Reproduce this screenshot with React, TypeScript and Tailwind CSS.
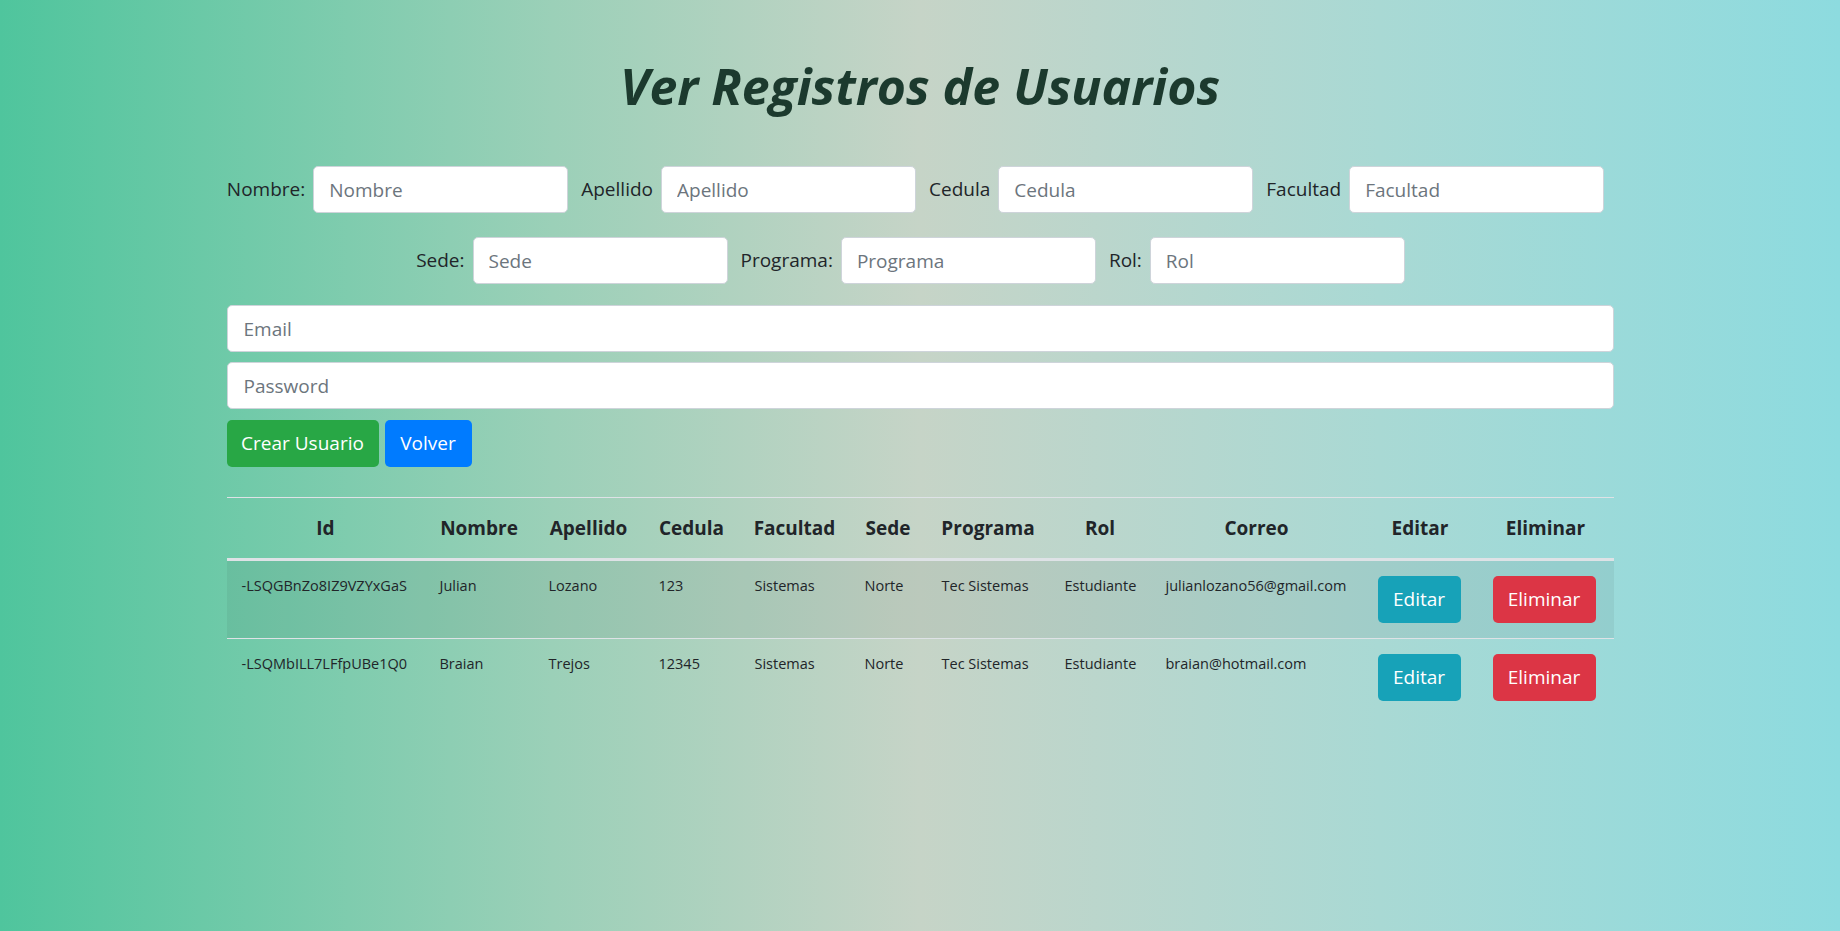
const font = { fontFamily: '"Open Sans", "Noto Sans", sans-serif' }

type Usuario = {
    id: string
    nombre: string
    apellido: string
    cedula: string
    facultad: string
    sede: string
    programa: string
    rol: string
    correo: string
}

const usuarios: Usuario[] = [
    {
        id: '-LSQGBnZo8IZ9VZYxGaS',
        nombre: 'Julian',
        apellido: 'Lozano',
        cedula: '123',
        facultad: 'Sistemas',
        sede: 'Norte',
        programa: 'Tec Sistemas',
        rol: 'Estudiante',
        correo: 'julianlozano56@gmail.com',
    },
    {
        id: '-LSQMbILL7LFfpUBe1Q0',
        nombre: 'Braian',
        apellido: 'Trejos',
        cedula: '12345',
        facultad: 'Sistemas',
        sede: 'Norte',
        programa: 'Tec Sistemas',
        rol: 'Estudiante',
        correo: 'braian@hotmail.com',
    },
]

function Campo({ label, placeholder }: { label: string; placeholder: string }) {
    return (
        <div className="flex items-center">
            <label className="text-[19px] text-[#212529] mr-[8px]">{label}</label>
            <input
                placeholder={placeholder}
                className="w-[255px] h-[47px] px-[15px] text-[19px] bg-white border border-[#ced4da] rounded-[5px] placeholder:text-[#6c757d] outline-none mr-[13px]"
            />
        </div>
    )
}

export default function App() {
    const headers = ['Id', 'Nombre', 'Apellido', 'Cedula', 'Facultad', 'Sede', 'Programa', 'Rol', 'Correo', 'Editar', 'Eliminar']
    const widths = ['w-[198px]', 'w-[109px]', 'w-[110px]', 'w-[96px]', 'w-[110px]', 'w-[77px]', 'w-[123px]', 'w-[101px]', 'w-[212px]', 'w-[115px]', 'w-[136px]']

    return (
        <div
            className="min-h-[931px] w-full bg-[linear-gradient(to_right,#4fc59d_0%,#9bd0b8_30%,#c6d4c7_50%,#a9d9d4_75%,#8ddbdf_100%)] text-[#212529]"
            style={font}
        >
            <div className="w-[1387px] mx-auto pt-[56px]">
                <h1 className="text-center text-[50px] leading-[60px] font-bold italic text-[#1c3a2e] mb-[50px]">
                    Ver Registros de Usuarios
                </h1>

                <div className="flex justify-center mb-[24px] pl-[4px]">
                    <Campo label="Nombre:" placeholder="Nombre" />
                    <Campo label="Apellido" placeholder="Apellido" />
                    <Campo label="Cedula" placeholder="Cedula" />
                    <Campo label="Facultad" placeholder="Facultad" />
                </div>
                <div className="flex justify-center mb-[21px] pr-[6px]">
                    <Campo label="Sede:" placeholder="Sede" />
                    <Campo label="Programa:" placeholder="Programa" />
                    <Campo label="Rol:" placeholder="Rol" />
                </div>

                <div className="flex flex-col gap-[10px]">
                    <input
                        placeholder="Email"
                        className="w-full h-[47px] px-[16px] text-[19px] bg-white border border-[#ced4da] rounded-[5px] placeholder:text-[#6c757d] outline-none"
                    />
                    <input
                        placeholder="Password"
                        className="w-full h-[47px] px-[16px] text-[19px] bg-white border border-[#ced4da] rounded-[5px] placeholder:text-[#6c757d] outline-none"
                    />
                </div>
                <div className="flex gap-[6px] mt-[11px] mb-[30px]">
                    <button className="h-[47px] w-[152px] text-[19px] text-white bg-[#28a745] rounded-[5px]">Crear Usuario</button>
                    <button className="h-[47px] w-[87px] text-[19px] text-white bg-[#007bff] rounded-[5px]">Volver</button>
                </div>

                <table className="w-full table-fixed border-collapse">
                    <colgroup>
                        {widths.map((w, i) => (
                            <col key={i} className={w} />
                        ))}
                    </colgroup>
                    <thead>
                        <tr className="border-t border-[#dee2e6]">
                            {headers.map((h) => (
                                <th key={h} className="py-[15px] text-[19px] leading-[30px] font-bold text-center border-b-[3px] border-[#dee2e6]">
                                    {h}
                                </th>
                            ))}
                        </tr>
                    </thead>
                    <tbody>
                        {usuarios.map((u, i) => (
                            <tr key={u.id} className={`border-t border-[#dee2e6] ${i === 0 ? 'bg-black/5' : ''}`}>
                                {[u.id, u.nombre, u.apellido, u.cedula, u.facultad, u.sede, u.programa, u.rol, u.correo].map((c, j) => (
                                    <td key={j} className="px-[15px] pt-[13px] pb-[15px] text-[14.5px] leading-[24px] align-top whitespace-nowrap">
                                        {c}
                                    </td>
                                ))}
                                <td className="px-[15px] py-[15px] align-top">
                                    <button className="h-[47px] w-[83px] text-[19px] text-white bg-[#17a2b8] rounded-[5px]">Editar</button>
                                </td>
                                <td className="px-[15px] py-[15px] align-top">
                                    <button className="h-[47px] w-[103px] text-[19px] text-white bg-[#dc3545] rounded-[5px]">Eliminar</button>
                                </td>
                            </tr>
                        ))}
                    </tbody>
                </table>
            </div>
        </div>
    )
}
